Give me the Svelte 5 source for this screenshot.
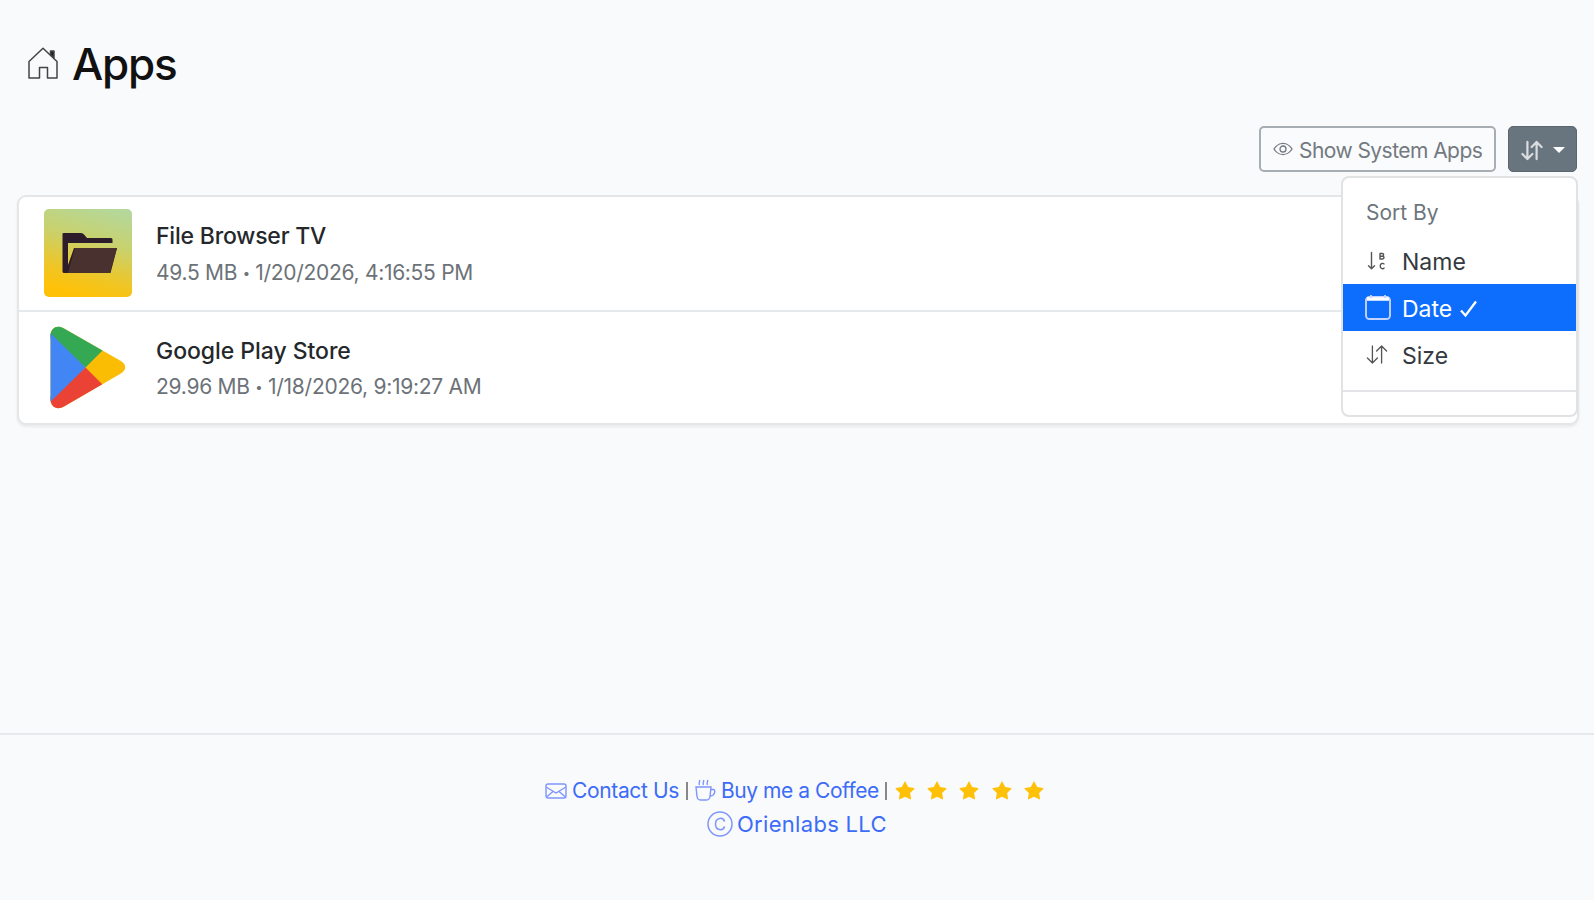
<script>
  const apps = [
    { icon: 'folder', name: 'File Browser TV', size: '49.5 MB', date: '1/20/2026, 4:16:55 PM' },
    { icon: 'play', name: 'Google Play Store', size: '29.96 MB', date: '1/18/2026, 9:19:27 AM' },
  ];
  const stars = [1, 2, 3, 4, 5];
</script>

{#snippet arrows()}
  <svg class="arrows" viewBox="0 0 16 16" fill="none" stroke="currentColor" stroke-linecap="round" stroke-linejoin="round">
    <path d="M4.5 1.5v13M.7 10.7l3.8 3.8 3.8-3.8M11.5 14.5v-13M7.7 5.3l3.8-3.8 3.8 3.8" />
  </svg>
{/snippet}

<div class="page">
  <header>
    <svg class="home" viewBox="0 0 30 32" fill="none" stroke="#444" stroke-width="1.5" stroke-linejoin="round">
      <path d="M1 14.5 15 1.2 29 14.5V31H19.5V20.5h-8V31H1z" />
      <path d="M22.5 4h3.5v7l-3.5-3z" fill="#222" />
    </svg>
    <h1>Apps</h1>
  </header>

  <div class="toolbar">
    <button class="system">
      <svg class="eye" viewBox="0 0 20 14" fill="none" stroke="currentColor" stroke-width="1.3">
        <path d="M1 7s3.3-5.6 9-5.6S19 7 19 7s-3.3 5.6-9 5.6S1 7 1 7z" />
        <circle cx="10" cy="7" r="3" />
      </svg>
      <span class="t-system">Show System Apps</span>
    </button>
    <div class="dropdown">
      <button class="sort">{@render arrows()}<i class="caret"></i></button>
      <div class="menu">
        <div class="heading"><span>Sort By</span></div>
        <div class="item">
          <svg class="az" viewBox="0 0 20 20" fill="none" stroke="currentColor" stroke-width="1.4" stroke-linecap="round" stroke-linejoin="round">
            <path d="M4.5 1.5v16M1.5 14.7l3 3 3-3" />
            <path d="M13 8V2.5h2.3a1.3 1.3 0 0 1 0 2.7H13h2.6a1.4 1.4 0 0 1 0 2.8zM17 13c-.5-.9-3.8-1.2-3.8 2s3.3 3.3 3.8 2" />
          </svg>
          <span>Name</span>
        </div>
        <div class="item active">
          <svg class="cal" viewBox="0 0 26 25" fill="none" stroke="currentColor" stroke-width="1.9">
            <rect x="1" y="2" width="24" height="22" rx="3.5" />
            <path d="M2 4h22" stroke="#fff" stroke-width="3.5" /><path d="M6 0v3M20 0v3" />
          </svg>
          <span>Date</span>
          <svg class="check" viewBox="0 0 17 18" fill="none" stroke="currentColor" stroke-width="2.3"><path d="m1 10.5 4.5 5L16 1.5" /></svg>
        </div>
        <div class="item">{@render arrows()}<span>Size</span></div>
        <div class="rule"></div>
      </div>
    </div>
  </div>

  <main>
    {#each apps as app}
      <article>
        {#if app.icon === 'folder'}
          <div class="tile">
            <svg viewBox="0 0 88 88">
              <path d="M18.5 25q0-1 1-1H37q2 0 3 1.5L43 29H67q1.500 0 1.500 1.500V34H24v22l6-17H73l-6.500 25H20q-1.500 0-1.500-1.500z" fill="#2d1d2a" />
              <path d="M31 39H73L66 64H24z" fill="#49312f" />
            </svg>
          </div>
        {:else}
          <div class="tile plain">
            <svg viewBox="0 0 88 88">
              <defs><clipPath id="tri"><path d="M6.500 12C6.500 4 13 .5 20 4.500L76 36.500c7 4 7 9.500 0 13.500L20 82.500C13 86.500 6.500 83 6.500 75z" /></clipPath></defs>
              <g clip-path="url(#tri)">
                <path d="M0 0h88v88H0z" fill="#fbbc04" />
                <path d="M0 0h85L41.500 43.500 0 10z" fill="#34a853" />
                <path d="M0 88V78L41.500 43.500 86 88z" fill="#ea4335" />
                <path d="M0 3 41.500 43.500 0 84z" fill="#4285f4" />
              </g>
            </svg>
          </div>
        {/if}
        <div class="copy">
          <h2 class={app.icon}>{app.name}</h2>
          <p class={app.icon}>{app.size} <b>•</b> {app.date}</p>
        </div>
      </article>
    {/each}
  </main>

  <footer>
    <div class="links">
      <svg class="mail" viewBox="0 0 22 16" fill="none" stroke="#7f95fb" stroke-width="1.4"><rect x="1" y="1" width="20" height="14" rx="2" /><path d="m1 4 10 6 10-6M1.500 14 8 8.500M20.500 14 14 8.500" /></svg>
      <a class="contact">Contact Us</a>
      <i class="bar"></i>
      <svg class="cup" viewBox="0 0 21 22" fill="none" stroke="#7f95fb" stroke-width="1.4"><path d="M1 8h15l-1 9.500c-.3 2-1.500 3.500-3.500 3.500h-6C3.500 21 2.300 19.500 2 17.500zM16 10.500h2.500c2 0 2 6-3 6.500M4.500 6c-1.500-2 1-3 0-5M8.500 6c-1.500-2 1-3 0-5M12.500 6c-1.500-2 1-3 0-5" /></svg>
      <a class="coffee">Buy me a Coffee</a>
      <i class="bar"></i>
      <div class="stars">
        {#each stars as star}
          <svg viewBox="0 0 16 16"><path fill="#ffc107" d="M3.612 15.443c-.386.198-.824-.149-.746-.592l.83-4.730L.173 6.765c-.329-.314-.158-.888.283-.950l4.898-.696L7.538.792c.197-.390.730-.390.927 0l2.184 4.327 4.898.696c.441.062.612.636.282.950l-3.522 3.356.830 4.730c.078.443-.360.790-.746.592L8 13.187l-4.389 2.256z" /></svg>
        {/each}
      </div>
    </div>
    <div class="owner">
      <svg viewBox="0 0 26 26" fill="none" stroke="#7f95fb" stroke-width="1.5"><circle cx="13" cy="13" r="12" /><path d="M17.500 10.500c-1-4.500-9-4.500-9 2.500s8 7 9 2.500" /></svg>
      <a>Orienlabs LLC</a>
    </div>
  </footer>
</div>

<style>
  :global(body) { margin: 0; background: #f8fafc; }
  * { box-sizing: border-box; }
  .page { width: 1594px; height: 900px; overflow: hidden; display: flex; flex-direction: column; background: #f8fafc; font-family: Inter, "Liberation Sans", sans-serif; color: #212529; }
  svg { display: block; flex: none; }
  span, a, h1, h2, p { white-space: nowrap; }
  header { height: 125px; flex: none; display: flex; align-items: flex-start; padding: 47px 0 0 28px; }
  .home { width: 30px; height: 32px; }
  h1 { margin: -7px 0 0 14px; font-size: 44px; line-height: 49px; font-weight: 450; letter-spacing: -1.2px; color: #111; }
  .toolbar { height: 70px; flex: none; display: flex; justify-content: flex-end; gap: 12px; padding: 1px 17px 0 0; }
  button { font: inherit; margin: 0; height: 46px; display: flex; align-items: center; border-radius: 5px; }
  .system { width: 237px; padding: 0 0 0 12px; background: #fafbfd; border: 2px solid #a6adb3; color: #737980; }
  .eye { width: 20px; height: 14px; margin-right: 6px; }
  .t-system { padding-top: 2px; font-size: 21px; letter-spacing: -0.55px; }
  .dropdown { position: relative; }
  .sort { width: 69px; padding: 2px 0 0 12px; background: #68747e; border: 1px solid #5c666f; color: #d9dde0; }
  .arrows { width: 22px; height: 21px; stroke-width: 1; }
  .sort .arrows { stroke-width: 1.7; }
  .caret { margin-left: 10px; border: 6px solid transparent; border-top-color: #fff; border-bottom: 0; }
  .menu { position: absolute; z-index: 2; right: -1px; top: 50px; width: 237px; height: 241px; background: #fff; border: 2px solid #e0e2e4; border-radius: 8px; padding-top: 13px; }
  .heading { height: 46px; padding-left: 23px; line-height: 44px; color: #6c757d; font-size: 21px; }
  .item { height: 47px; display: flex; align-items: center; padding-left: 22px; font-size: 23px; color: #343a40; }
  .item span { padding-top: 2px; }
  .item .arrows { width: 24px; height: 21px; margin-right: 13px; color: #555; }
  .item .az { width: 20px; height: 20px; margin: 0 15px 0 2px; color: #555; }
  .item .cal { width: 26px; height: 25px; margin-right: 11px; color: #c5d3ff; }
  .item.active { background: #0d6efd; color: #fff; }
  .item .check { width: 17px; height: 18px; margin: 2px 0 0 8px; }
  .rule { margin-top: 12px; border-top: 2px solid #e2e4e7; }
  main { width: 1562px; height: 230px; flex: none; margin-left: 17px; background: #fff; border: 2px solid #e4e6e8; border-radius: 9px; box-shadow: 0 2px 3px #0001; overflow: hidden; }
  article { height: 113px; display: flex; padding: 12px 0 0 25px; }
  article + article { border-top: 2px solid #e6e9eb; padding-top: 12px; }
  .tile { width: 88px; height: 88px; flex: none; border-radius: 5px; background: linear-gradient(195deg, #b4d89b 5%, #c9d16c 38%, #f1c522 72%, #ffc107 90%); }
  .plain { background: none; }
  .copy { margin-left: 24px; }
  h2 { margin: 13px 0 0; font-size: 23px; line-height: 28px; font-weight: 500; letter-spacing: -0.2px; color: #25282b; }
  h2.play { letter-spacing: -0.05px; }
  p { margin: 10px 0 0; font-size: 21px; line-height: 26px; letter-spacing: -0.3px; color: #6c7278; }
  p.play { letter-spacing: -0.27px; margin-top: 9px; }
  b { font-size: 13px; font-weight: 400; vertical-align: 2px; }
  footer { margin-top: 308px; height: 167px; flex: none; border-top: 2px solid #e7eaed; padding-top: 41px; color: #3d6cf8; font-size: 21px; line-height: 30px; }
  .links { display: flex; align-items: center; padding-left: 545px; height: 30px; }
  .mail { width: 22px; height: 16px; margin: -1px 5px 0 0; }
  .bar { width: 2px; height: 18px; background: #888; }
  .cup { width: 21px; height: 22px; margin: -3px 5px 0 7px; }
  .contact { width: 114px; letter-spacing: -0.35px; }
  .coffee { width: 164px; letter-spacing: -0.45px; }
  .stars { display: flex; gap: 12.2px; margin: -2px 0 0 8px; }
  .stars svg { width: 20px; height: 19px; }
  .owner { display: flex; align-items: center; padding-left: 707px; height: 30px; margin-top: 3px; font-size: 22px; letter-spacing: 0.3px; }
  .owner svg { width: 26px; height: 26px; margin-right: 4px; }
</style>
